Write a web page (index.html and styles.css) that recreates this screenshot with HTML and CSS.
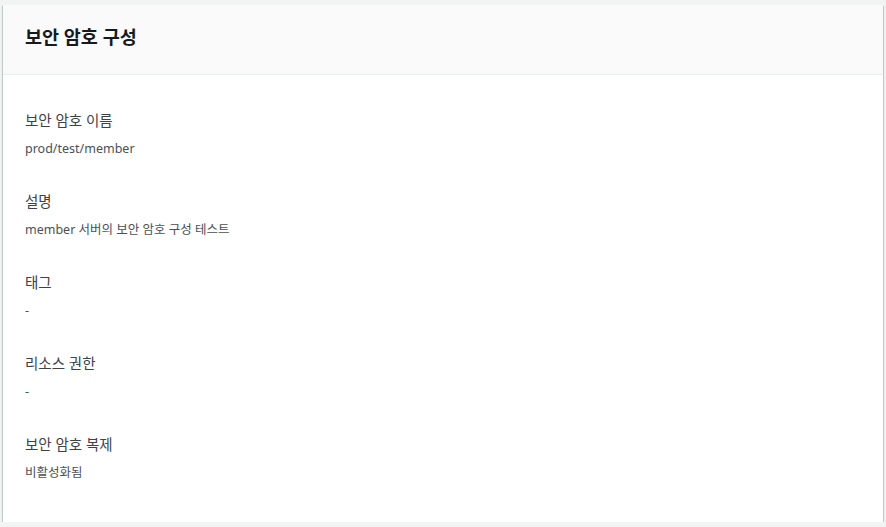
FILE: index.html
```html
<!DOCTYPE html>
<html lang="ko">
<head>
<meta charset="utf-8">
<link rel="stylesheet" href="styles.css">
</head>
<body>
<div class="card">
  <div class="card-header"><h2 class="title">보안 암호 구성</h2></div>
  <div class="card-body">
    <div class="item"><div class="label">보안 암호 이름</div><div class="value">prod/test/member</div></div>
    <div class="item"><div class="label">설명</div><div class="value">member 서버의 보안 암호 구성 테스트</div></div>
    <div class="item"><div class="label">태그</div><div class="value">-</div></div>
    <div class="item"><div class="label">리소스 권한</div><div class="value">-</div></div>
    <div class="item"><div class="label">보안 암호 복제</div><div class="value">비활성화됨</div></div>
  </div>
</div>
</body>
</html>
```
FILE: styles.css
```css
html, body { margin: 0; padding: 0; }
body {
  background: #f2f3f3;
  padding: 5px 3px 0 3px;
  font-family: "Noto Sans", "Noto Sans CJK KR", sans-serif;
  color: #16191f;
}
.card {
  background: #fff;
  height: 517px;
  box-sizing: border-box;
  box-shadow: 0 1px 1px 0 rgba(0,28,36,.3), 1px 1px 1px 0 rgba(0,28,36,.15), -1px 1px 1px 0 rgba(0,28,36,.15);
}
.card-header {
  background: #fafafa;
  border-bottom: 1px solid #eaeded;
  height: 70px;
  display: flex;
  align-items: center;
  padding: 0 22px 5px 22px;
  box-sizing: border-box;
}
.title {
  margin: 0;
  font-size: 18.5px;
  font-weight: 700;
  line-height: 22px;
  color: #16191f;
}
.card-body {
  padding: 34px 22px 0 22px;
  display: flex;
  flex-direction: column;
  gap: 32px;
}
.item { display: flex; flex-direction: column; gap: 9px; }
.label {
  font-size: 14.5px;
  line-height: 22px;
  color: #3d4148;
}
.value {
  font-size: 12.5px;
  line-height: 18px;
  color: #4a5058;
}
```
